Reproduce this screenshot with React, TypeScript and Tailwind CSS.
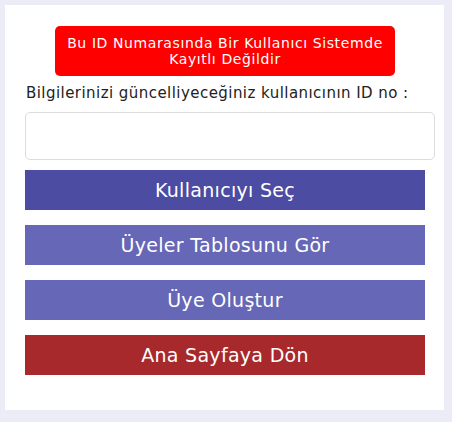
export default function App() {
  return (
    <div className="min-h-screen w-full bg-[#ececf6] pt-[5px] pl-[5px]" style={{ fontFamily: '"DejaVu Sans", "Noto Sans", sans-serif' }}>
      <div className="w-[439px] h-[405px] bg-white flex flex-col pl-[20px] pt-[21px]">
        <div className="ml-[30px] w-[340px] h-[50px] bg-[#ff0000] rounded-[5px] flex flex-col items-center justify-center text-white text-[14px] leading-[16px] tracking-[0.6px] text-center">
          <span>Bu ID Numarasında Bir Kullanıcı Sistemde</span>
          <span>Kayıtlı Değildir</span>
        </div>
        <label className="mt-[6px] ml-[1px] text-[15px] leading-[22px] tracking-[0.45px] text-[#222]">
          Bilgilerinizi güncelliyeceğiniz kullanıcının ID no :
        </label>
        <input className="mt-[8px] w-[410px] h-[48px] border border-[#dcdcdc] rounded-[5px] outline-none px-3" />
        <button className="mt-[10px] w-[400px] h-[40px] bg-[#4c4ca3] text-white text-[19px] tracking-[0.3px]">Kullanıcıyı Seç</button>
        <button className="mt-[15px] w-[400px] h-[40px] bg-[#6767b7] text-white text-[19px] tracking-[0.3px]">Üyeler Tablosunu Gör</button>
        <button className="mt-[15px] w-[400px] h-[40px] bg-[#6767b7] text-white text-[19px] tracking-[0.3px]">Üye Oluştur</button>
        <button className="mt-[15px] w-[400px] h-[40px] bg-[#a8292c] text-white text-[19px] tracking-[0.3px]">Ana Sayfaya Dön</button>
      </div>
    </div>
  );
}
